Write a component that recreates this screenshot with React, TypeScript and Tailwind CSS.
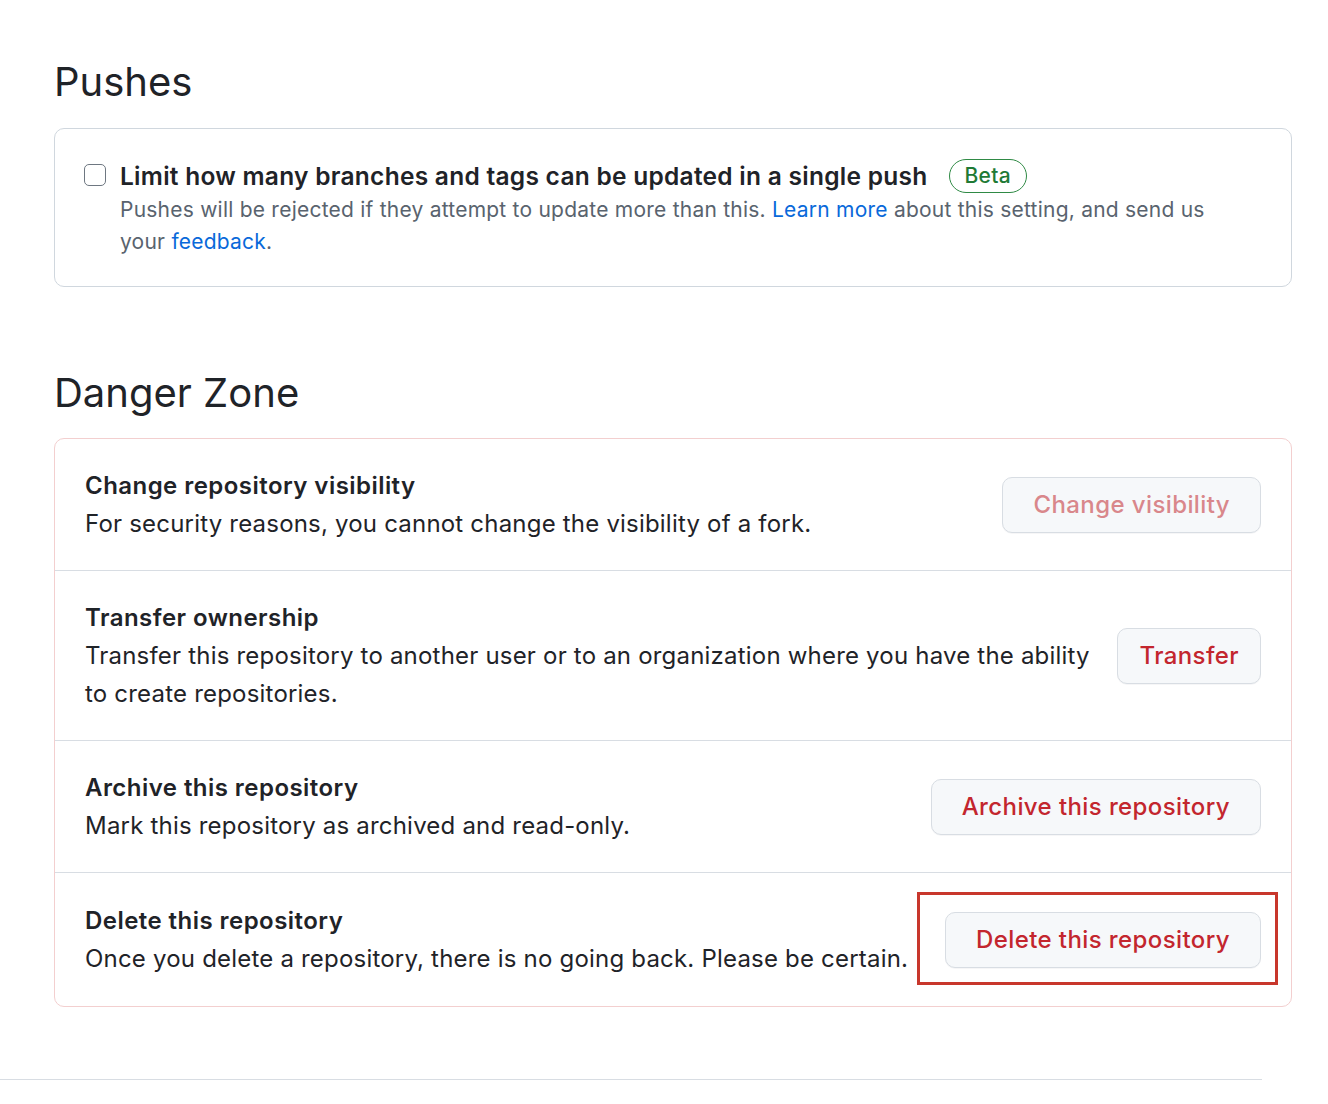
import React from "react";

function DangerRow({
  title,
  desc,
  button,
  disabled,
  highlight,
  last,
  pad = "px-[30px]",
}: {
  title: string;
  desc: string;
  button: string;
  disabled?: boolean;
  highlight?: boolean;
  last?: boolean;
  pad?: string;
}) {
  return (
    <div
      className={`flex items-center justify-between gap-4 px-[30px] ${
        last ? "pt-[29px] pb-[28px]" : "pt-[28px] pb-[27px] border-b border-[#d8dde3]"
      }`}
    >
      <div className="flex-1 text-[24px] leading-[38px] text-[#1f2328]">
        <div className="font-semibold tracking-[0.45px]">{title}</div>
        <div className="tracking-[0.2px]">{desc}</div>
      </div>
      <div className="relative shrink-0">
        <button
          className={`h-[56px] rounded-[10px] border border-[#d8dde3] bg-[#f6f8fa] ${pad} text-[24px] font-medium tracking-[0.4px] shadow-[0_1px_0_rgba(31,35,40,0.04)] ${
            disabled ? "text-[#d9878b]" : "text-[#c3262e]"
          }`}
        >
          {button}
        </button>
        {highlight && (
          <div className="pointer-events-none absolute -bottom-[17px] -left-[28px] -right-[17px] -top-[20px] border-[3px] border-[#c8372c]" />
        )}
      </div>
    </div>
  );
}

export default function App() {
  return (
    <div
      className="min-h-[1104px] bg-white"
      style={{ fontFamily: "Inter, 'Noto Sans', 'Liberation Sans', sans-serif" }}
    >
      <div className="w-[1292px] pl-[54px] pt-[56px]">
        <h2 className="text-[40px] leading-[52px] font-normal text-[#1f2328]">Pushes</h2>
        <div className="mt-[20px] rounded-[10px] border border-[#d0d7de] pl-[29px] pr-[50px] pt-[30px] pb-[28px]">
          <div className="flex items-start gap-[14px]">
            <div className="mt-[5px] h-[22px] w-[22px] shrink-0 rounded-[5px] border-[1.5px] border-[#6e7781] bg-white" />
            <div>
              <div className="flex items-center gap-[21px]">
                <span className="text-[24.5px] leading-[34px] font-semibold tracking-[0.27px] text-[#1f2328]">
                  Limit how many branches and tags can be updated in a single push
                </span>
                <span className="inline-flex h-[34px] items-center rounded-full border border-[#2f8a45] px-[15px] text-[21px] font-medium tracking-[0.3px] text-[#1f7a35]">
                  Beta
                </span>
              </div>
              <p className="mt-[1px] text-[21px] leading-[32px] tracking-[0.23px] text-[#59636e]">
                Pushes will be rejected if they attempt to update more than this.{" "}
                <a className="text-[#0969da]">Learn more</a> about this setting, and send us
                your <a className="text-[#0969da]">feedback</a>.
              </p>
            </div>
          </div>
        </div>

        <h2 className="mt-[80px] text-[40px] leading-[52px] font-normal text-[#1f2328]">
          Danger Zone
        </h2>
        <div className="mt-[19px] rounded-[10px] border border-[#f3cfcf]">
          <DangerRow
            title="Change repository visibility"
            desc="For security reasons, you cannot change the visibility of a fork."
            button="Change visibility"
            disabled
          />
          <DangerRow
            title="Transfer ownership"
            desc="Transfer this repository to another user or to an organization where you have the ability to create repositories."
            button="Transfer"
            pad="px-[21px]"
          />
          <DangerRow
            title="Archive this repository"
            desc="Mark this repository as archived and read-only."
            button="Archive this repository"
          />
          <DangerRow
            title="Delete this repository"
            desc="Once you delete a repository, there is no going back. Please be certain."
            button="Delete this repository"
            highlight
            last
          />
        </div>
      </div>
      <div className="mt-[72px] h-px w-[1262px] bg-[#d8dde3]" />
    </div>
  );
}
